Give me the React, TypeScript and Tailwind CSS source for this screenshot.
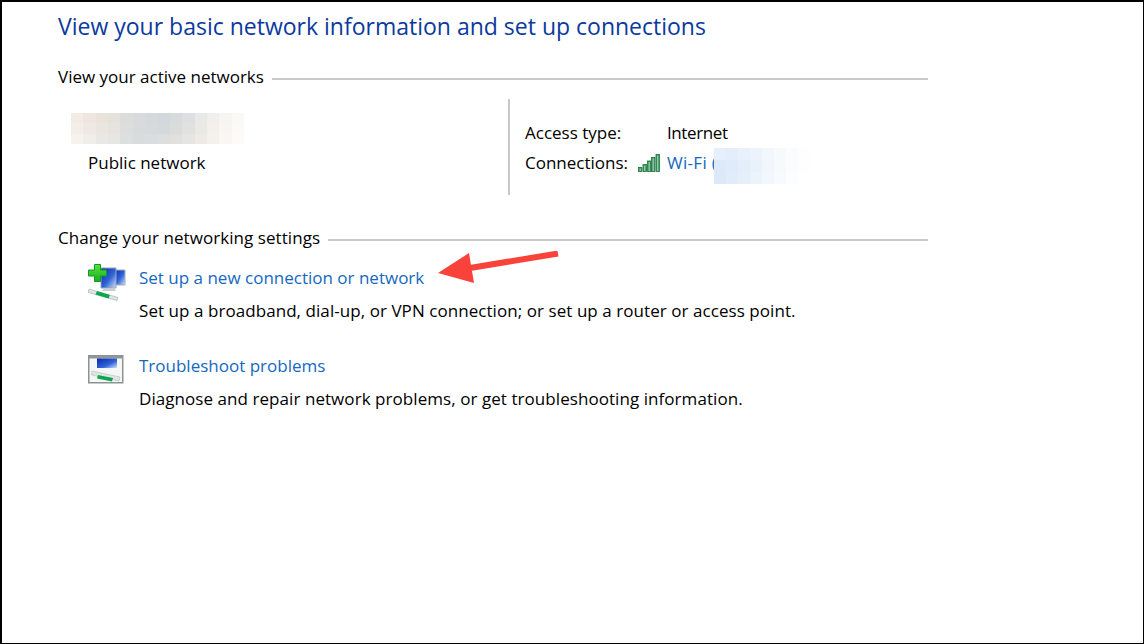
import React from 'react';

const nameCells = [
  ['#f3ebe6', '#efe6df', '#e9e3dc', '#e5e2dc', '#dcdcdb', '#d8dadb', '#d5d9dc', '#d3d8dc', '#d8dbdc', '#dddfe1', '#e9e9e8', '#f1efed', '#f7f5f2', '#fbf9f7'],
  ['#f4eee8', '#f0e8e2', '#eae5df', '#e6e4de', '#dcdddc', '#d8dbdc', '#d6dadc', '#d4d9dc', '#dadcdc', '#e1e1df', '#ebe9e6', '#f2efec', '#f8f5f2', '#fcfaf8'],
  ['#f6f2ee', '#f1ede8', '#e9e8e4', '#e6e6e3', '#dcdfdf', '#d8dcdf', '#dadddf', '#dddfdf', '#e0e1df', '#e6e5e1', '#eeebe6', '#f4f1ed', '#f9f6f3', '#fcfbf9'],
];

const wifiCells = [
  ['#e6f0fa', '#e3eefa', '#e8f1fb', '#ecf3fc', '#f1f7fd', '#f6fafd', '#fafcfe', '#fdfeff'],
  ['#dbe9f8', '#dfebf9', '#e4eefa', '#e9f2fb', '#f0f6fc', '#f6fafd', '#fafcfe', '#fefeff'],
  ['#dbe9f8', '#e0ecf9', '#e5effa', '#ebf3fb', '#f2f7fd', '#f7fafe', '#fbfdfe', '#ffffff'],
];

const Mosaic = ({ rows, className }: { rows: string[][]; className: string }) => (
  <div className={`flex flex-col ${className}`}>
    {rows.map((row, r) => (
      <div key={r} className="flex flex-1">
        {row.map((color, c) => (
          <div key={c} className="flex-1" style={{ backgroundColor: color }} />
        ))}
      </div>
    ))}
  </div>
);

const SectionTitle = ({ label, className }: { label: string; className: string }) => (
  <div className={`flex items-center h-6 ${className}`}>
    <span className="text-[17px] text-black whitespace-nowrap">{label}</span>
    <div className="flex-1 h-[2px] bg-[#c8c8c8] ml-2 mt-[4px]" />
  </div>
);

const SignalIcon = () => (
  <svg width="22" height="18" viewBox="0 0 22 18" className="shrink-0">
    {[
      [0.5, 13.5],
      [5, 10.5],
      [9.5, 7],
      [13.5, 3.5],
      [18, 0.5],
    ].map(([x, y]) => (
      <g key={x}>
        <rect x={x} y={y} width="3.4" height={17.5 - y} fill="#3f9a62" stroke="#1f7040" strokeWidth="0.8" />
        <rect x={x + 1.2} y={y + 1} width="1" height={16 - y} fill="#a8d8b8" />
      </g>
    ))}
  </svg>
);

const SetupIcon = () => (
  <svg width="38" height="37" viewBox="0 0 38 37" className="shrink-0">
    <defs>
      <linearGradient id="scr1" x1="0" y1="0" x2="1" y2="1">
        <stop offset="0" stopColor="#0828b0" />
        <stop offset="0.55" stopColor="#2f63d8" />
        <stop offset="1" stopColor="#d4e2f6" />
      </linearGradient>
      <linearGradient id="plus1" x1="0" y1="0" x2="0" y2="1">
        <stop offset="0" stopColor="#58e23c" />
        <stop offset="1" stopColor="#12b020" />
      </linearGradient>
    </defs>
    <path d="M26 6h11v15H26z" fill="url(#scr1)" stroke="#a4aebc" />
    <path d="M13 4h15v20H13z" fill="url(#scr1)" stroke="#98a4b6" />
    <path d="M16 24h10l2 3H14z" fill="#c9ced6" />
    <path d="M6.5 0.5h6v5.5h6v6h-6v5.5h-6V12H0.5V6h6z" fill="url(#plus1)" stroke="#149a20" />
    <path d="M1 25l29 8.5-1 3L0 28.5z" fill="#dfe5e1" stroke="#a5ada8" strokeWidth="0.6" />
    <path d="M9 27l13 4-1.5 3.5L7.5 30.5z" fill="#0fa650" />
  </svg>
);

const TroubleshootIcon = () => (
  <svg width="36" height="29" viewBox="0 0 36 29" className="shrink-0">
    <defs>
      <linearGradient id="scr2" x1="0" y1="0" x2="1" y2="1">
        <stop offset="0" stopColor="#0828b0" />
        <stop offset="0.6" stopColor="#2f63d8" />
        <stop offset="1" stopColor="#d4e2f6" />
      </linearGradient>
    </defs>
    <rect x="0.75" y="0.75" width="34" height="27" fill="#f5f7f7" stroke="#8d9296" strokeWidth="1.5" />
    <rect x="1" y="1" width="34" height="2.5" fill="#8f979c" />
    <path d="M9 3.5h20v9.5H9z" fill="url(#scr2)" />
    <path d="M4 16l28 6-1 4L3.5 20z" fill="#dfe5e1" stroke="#aab2ad" strokeWidth="0.5" />
    <path d="M10 20l15 3-1 3.5-15-3z" fill="#0fa650" />
  </svg>
);

const TaskRow = ({ icon, link, text, className, iconClass }: { icon: React.ReactNode; link: string; text: string; className: string; iconClass: string }) => (
  <div className={`flex ${className}`}>
    <div className={`w-[51px] ${iconClass}`}>{icon}</div>
    <div className="flex flex-col">
      <a className="text-[17px] leading-6 text-[#1568c0] whitespace-nowrap">{link}</a>
      <p className="text-[17px] leading-6 mt-[9px] text-black whitespace-nowrap tracking-[0.06px]">{text}</p>
    </div>
  </div>
);

export default function App() {
  return (
    <div
      className="relative w-[1144px] h-[644px] overflow-hidden bg-white border-l-2 border-t-2 border-r border-b border-black"
      style={{ fontFamily: '"Open Sans", "Noto Sans", sans-serif' }}
    >
      <div className="w-[870px] ml-[56px] flex flex-col">
        <h1 className="text-[23px] leading-8 mt-[8px] text-[#0b3a9e] whitespace-nowrap">
          View your basic network information and set up connections
        </h1>

        <SectionTitle label="View your active networks" className="mt-[23px]" />

        <div className="flex mt-[10px] h-[96px]">
          <div className="w-[450px] flex flex-col">
            <Mosaic rows={nameCells} className="w-[173px] h-[31px] ml-[13px] mt-[14px]" />
            <span className="ml-[30px] mt-[7px] text-[17px] leading-6 text-black">Public network</span>
          </div>
          <div className="w-[2px] bg-[#c8c8c8]" />
          <div className="flex flex-col pl-[15px] pt-[22px]">
            <div className="flex h-6 items-center text-[17px] text-black">
              <span className="w-[142px]">Access type:</span>
              <span className="tracking-[-0.4px]">Internet</span>
            </div>
            <div className="flex h-6 items-center mt-[6px] text-[17px]">
              <span className="w-[113px] text-black">Connections:</span>
              <SignalIcon />
              <a className="ml-[7px] w-[47px] whitespace-nowrap text-[#1568c0] tracking-[0.3px]">Wi-Fi (</a>
              <Mosaic rows={wifiCells} className="w-[96px] h-[37px] mt-[6px]" />
            </div>
          </div>
        </div>

        <SectionTitle label="Change your networking settings" className="mt-[31px] tracking-[0.06px]" />

        <TaskRow
          className="mt-[16px] ml-[30px]"
          iconClass="-mt-[2px]"
          icon={<SetupIcon />}
          link="Set up a new connection or network"
          text="Set up a broadband, dial-up, or VPN connection; or set up a router or access point."
        />
        <TaskRow
          className="mt-[31px] ml-[30px]"
          iconClass="mt-[1px]"
          icon={<TroubleshootIcon />}
          link="Troubleshoot problems"
          text="Diagnose and repair network problems, or get troubleshooting information."
        />
      </div>

      {/* annotation arrow */}
      <svg width="130" height="40" viewBox="0 0 130 40" className="absolute left-[436px] top-[249px]">
        <path d="M120 2.5L32 17" stroke="#f9423a" strokeWidth="6" fill="none" />
        <path d="M0 22L31 2l5 30z" fill="#f9423a" />
      </svg>
    </div>
  );
}
